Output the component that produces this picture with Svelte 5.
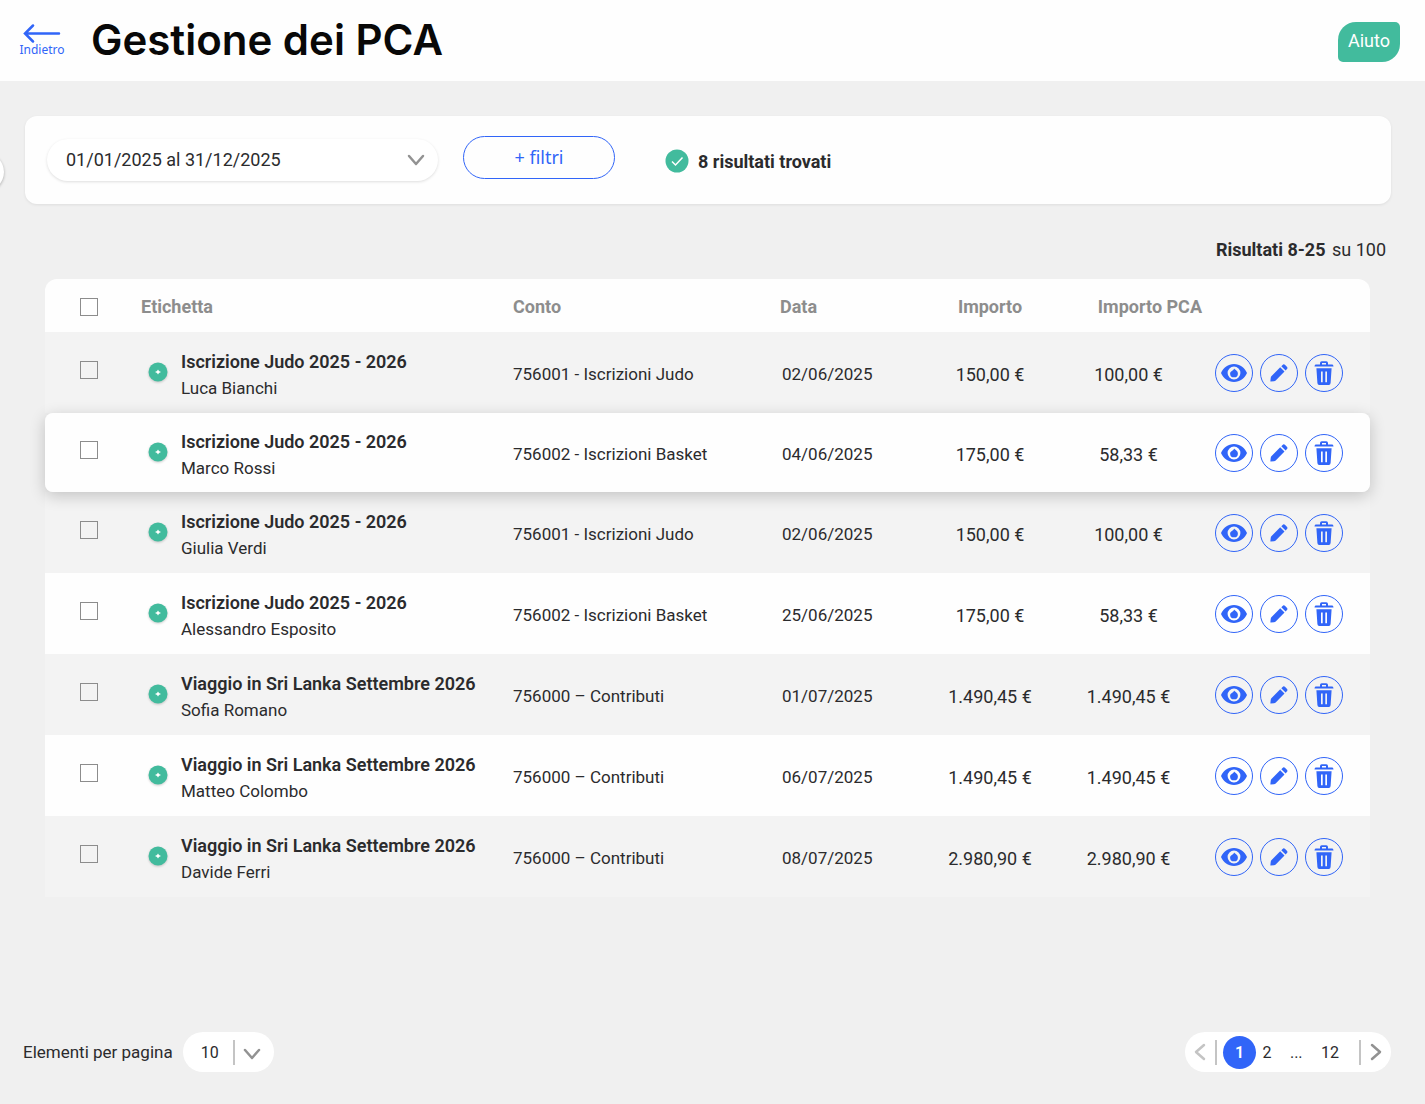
<script lang="ts">
  type Row = {
    title: string;
    person: string;
    account: string;
    date: string;
    amount: string;
    pca: string;
    raised?: boolean;
  };

  const judo = 'Iscrizione Judo 2025 - 2026';
  const trip = 'Viaggio in Sri Lanka Settembre 2026';

  const rows: Row[] = [
    { title: judo, person: 'Luca Bianchi', account: '756001 - Iscrizioni Judo', date: '02/06/2025', amount: '150,00 €', pca: '100,00 €' },
    { title: judo, person: 'Marco Rossi', account: '756002 - Iscrizioni Basket', date: '04/06/2025', amount: '175,00 €', pca: '58,33 €', raised: true },
    { title: judo, person: 'Giulia Verdi', account: '756001 - Iscrizioni Judo', date: '02/06/2025', amount: '150,00 €', pca: '100,00 €' },
    { title: judo, person: 'Alessandro Esposito', account: '756002 - Iscrizioni Basket', date: '25/06/2025', amount: '175,00 €', pca: '58,33 €' },
    { title: trip, person: 'Sofia Romano', account: '756000 – Contributi', date: '01/07/2025', amount: '1.490,45 €', pca: '1.490,45 €' },
    { title: trip, person: 'Matteo Colombo', account: '756000 – Contributi', date: '06/07/2025', amount: '1.490,45 €', pca: '1.490,45 €' },
    { title: trip, person: 'Davide Ferri', account: '756000 – Contributi', date: '08/07/2025', amount: '2.980,90 €', pca: '2.980,90 €' },
  ];

  let selected: boolean[] = $state(rows.map(() => false));
  let allSelected = $derived(selected.every(Boolean));
  let page = $state(1);

  function toggleAll() {
    const next = !allSelected;
    selected = rows.map(() => next);
  }
</script>

<div class="page">
  <header class="topbar">
    <a class="back" href="#indietro">
      <svg width="38" height="19" viewBox="0 0 38 19" aria-hidden="true">
        <path d="M10 1.5 2 9.5l8 8M2.5 9.5H36" />
      </svg>
      <span>Indietro</span>
    </a>
    <h1>Gestione dei PCA</h1>
    <button class="help" type="button">Aiuto</button>
  </header>

  <button class="drawer" type="button" aria-label="Apri menu"></button>

  <main>
    <section class="filters">
      <div class="picker period">
        <select aria-label="Periodo">
          <option>01/01/2025 al 31/12/2025</option>
        </select>
        <svg class="chevron" width="18" height="12" viewBox="0 0 18 12" aria-hidden="true">
          <path d="m2 2 7 8 7-8" />
        </svg>
      </div>
      <button class="add-filter" type="button">+ filtri</button>
      <p class="found">
        <svg width="24" height="24" viewBox="0 0 24 24" aria-hidden="true">
          <circle cx="12" cy="12" r="11.5" />
          <path d="m7 12.500 3.500 3.500 7-7.500" />
        </svg>
        8 risultati trovati
      </p>
    </section>

    <p class="count"><strong>Risultati 8-25</strong> su 100</p>

    <table>
      <colgroup>
        <col class="c-check" />
        <col />
        <col class="c-account" />
        <col class="c-date" />
        <col class="c-amount" />
        <col class="c-pca" />
        <col class="c-actions" />
      </colgroup>
      <thead>
        <tr>
          <th class="check">
            <input type="checkbox" aria-label="Seleziona tutto" checked={allSelected} onchange={toggleAll} />
          </th>
          <th>Etichetta</th>
          <th>Conto</th>
          <th>Data</th>
          <th class="center">Importo</th>
          <th class="right">Importo PCA</th>
          <th aria-label="Azioni"></th>
        </tr>
      </thead>
      <tbody>
        {#each rows as row, i}
          <tr class:raised={row.raised}>
            <td class="check">
              <input type="checkbox" aria-label="Seleziona {row.person}" bind:checked={selected[i]} />
            </td>
            <td>
              <div class="label">
                <svg class="dot" width="20" height="20" viewBox="0 0 20 20" aria-hidden="true">
                  <circle cx="10" cy="10" r="9.5" />
                  <path d="M10 7.500 11 9l2 1-2 1-1 1.500L9 11l-2-1 2-1z" />
                </svg>
                <div>
                  <strong>{row.title}</strong>
                  <span>{row.person}</span>
                </div>
              </div>
            </td>
            <td>{row.account}</td>
            <td class="date">{row.date}</td>
            <td class="center amount">{row.amount}</td>
            <td class="center amount">{row.pca}</td>
            <td class="actions-cell">
              <div class="actions">
                <button type="button" aria-label="Visualizza">
                  <svg width="26" height="18" viewBox="0 0 26 18" aria-hidden="true">
                    <path fill-rule="evenodd" d="M13 0C7 0 2.500 3.500 0 9c2.500 5.500 7 9 13 9s10.500-3.500 13-9C23.500 3.500 19 0 13 0Zm0 2.600a6.400 6.400 0 1 1 0 12.800 6.400 6.400 0 0 1 0-12.800Z" />
                    <path d="M13.200 4.500c.3 1.200 3.700 2 3.700 4.900a3.900 3.900 0 0 1-7.800 0c0-2.200 3.300-2.300 4.100-4.900Z" />
                  </svg>
                </button>
                <button type="button" aria-label="Modifica">
                  <svg width="18" height="18" viewBox="0 0 18 18" aria-hidden="true">
                    <path d="M10.200 3.300 14.500 7.600 5.700 16.400Q5 17 4 17.200L.8 17.600Q.3 17.600.4 17L.7 13.900Q.8 12.800 1.600 12ZM11.300 2.200 13.100.6Q14 0 14.900.8L17.100 3Q17.900 3.900 17.200 4.800L15.600 6.500Z" />
                  </svg>
                </button>
                <button type="button" aria-label="Elimina">
                  <svg width="20" height="24" viewBox="0 0 20 24" aria-hidden="true">
                    <path d="M6 3.500V2Q6 .2 7.800.2h4.400Q14 .2 14 2v1.500h4.300q1 0 1.200 2H.5q.2-2 1.200-2Zm2 0h4V2H8Z" fill-rule="evenodd" />
                    <path d="M2.400 7.300h15.200l-1 14.700q-.2 1.900-1.800 1.900H5.200q-1.600 0-1.800-1.900ZM7 10.500v10.700h1.700V10.500Zm4.300 0v10.700H13V10.500Z" fill-rule="evenodd" />
                  </svg>
                </button>
              </div>
            </td>
          </tr>
        {/each}
      </tbody>
    </table>
  </main>

  <footer>
    <div class="per-page">
      <label for="page-size">Elementi per pagina</label>
      <div class="picker size">
        <select id="page-size">
          <option>10</option>
          <option>25</option>
          <option>50</option>
        </select>
        <svg class="chevron" width="18" height="12" viewBox="0 0 18 12" aria-hidden="true">
          <path d="m2 2 7 8 7-8" />
        </svg>
      </div>
    </div>

    <nav class="pagination" aria-label="Paginazione">
      <button class="step prev" type="button" aria-label="Precedente" disabled={page === 1} onclick={() => page--}>
        <svg width="12" height="18" viewBox="0 0 12 18" aria-hidden="true"><path d="M10 2 2 9l8 7" /></svg>
      </button>
      <div class="numbers">
        <button type="button" class:current={page === 1} onclick={() => (page = 1)}>1</button>
        <button type="button" class="second" class:current={page === 2} onclick={() => (page = 2)}>2</button>
        <span>...</span>
        <button type="button" class:current={page === 12} onclick={() => (page = 12)}>12</button>
      </div>
      <button class="step next" type="button" aria-label="Successiva" disabled={page === 12} onclick={() => page++}>
        <svg width="12" height="18" viewBox="0 0 12 18" aria-hidden="true"><path d="m2 2 8 7-8 7" /></svg>
      </button>
    </nav>
  </footer>
</div>

<style>
  :global(body) {
    background: #f0f0f0;
  }

  .page {
    --blue: #3165f8;
    --green: #42bb9d;
    --ink: #2b2b2d;
    position: relative;
    display: flex;
    flex-direction: column;
    min-height: 100vh;
    color: var(--ink);
    font-family: Roboto, 'Liberation Sans', sans-serif;
    font-size: 18px;
    line-height: 27px;
  }

  .page :global(*) {
    box-sizing: border-box;
  }

  button,
  select {
    margin: 0;
    padding: 0;
    border: 0;
    background: none;
    color: inherit;
    font: inherit;
    cursor: pointer;
  }

  p,
  h1 {
    margin: 0;
  }

  .topbar {
    display: flex;
    align-items: center;
    height: 81px;
    padding: 0 25px 2px 20px;
    background: #fefefe;
  }

  .back {
    display: flex;
    flex-direction: column;
    align-items: center;
    width: 44px;
    padding-top: 2px;
    color: var(--blue);
    font-family: 'Noto Sans', sans-serif;
    font-size: 12px;
    line-height: 14px;
    text-decoration: none;
  }

  .back svg {
    fill: none;
    stroke: var(--blue);
    stroke-width: 2.5;
    stroke-linecap: round;
  }

  h1 {
    margin-left: 27px;
    color: #080808;
    font-family: Inter, sans-serif;
    font-size: 42px;
    font-weight: 600;
    line-height: 78px;
  }

  .help {
    width: 62px;
    height: 40px;
    margin-top: 4px;
    margin-left: auto;
    padding-bottom: 2px;
    border-radius: 18px 5px 18px 5px;
    background: var(--green);
    color: #fff;
  }

  .drawer {
    position: absolute;
    top: 153px;
    left: -34px;
    width: 38px;
    height: 38px;
    border-radius: 50%;
    background: #fff;
    box-shadow: 0 1px 3px rgba(0, 0, 0, 0.3);
  }

  main {
    padding: 35px 34px 0 25px;
  }

  .filters {
    display: flex;
    align-items: center;
    height: 88px;
    padding: 0 22px;
    border-radius: 12px;
    background: #fefefe;
    box-shadow: 0 1px 3px rgba(0, 0, 0, 0.08);
  }

  .picker {
    display: grid;
    align-items: center;
    border-radius: 21px;
    background: #fff;
  }

  .picker select {
    grid-area: 1 / 1;
    width: 100%;
    height: 100%;
    appearance: none;
    border-radius: inherit;
  }

  .picker .chevron {
    grid-area: 1 / 1;
    justify-self: end;
    pointer-events: none;
  }

  .chevron,
  .step svg {
    fill: none;
    stroke: #929292;
    stroke-width: 2.5;
    stroke-linecap: round;
    stroke-linejoin: round;
  }

  .period {
    width: 391px;
    height: 42px;
    box-shadow: 0 1px 3px rgba(0, 0, 0, 0.13);
  }

  .period select {
    padding: 0 0 2px 19px;
  }

  .period .chevron {
    margin-right: 13px;
  }

  .add-filter {
    width: 152px;
    height: 43px;
    margin: 0 50px 5px 25px;
    border: 1px solid var(--blue);
    border-radius: 22px;
    color: var(--blue);
    font-family: 'Noto Sans', sans-serif;
  }

  .found {
    display: flex;
    align-items: center;
    gap: 9px;
    padding-top: 2px;
    font-weight: 700;
  }

  .found circle,
  .dot circle {
    fill: var(--green);
  }

  .found path {
    fill: none;
    stroke: #fff;
    stroke-width: 1.5;
  }

  .count {
    padding: 32px 0 16px;
    margin-right: 5px;
    text-align: right;
  }

  .count strong {
    font-weight: 700;
    margin-right: 2px;
  }

  table {
    width: calc(100% - 41px);
    margin-left: 20px;
    border-spacing: 0;
    table-layout: fixed;
  }

  .c-check {
    width: 96px;
  }

  .c-account {
    width: 267px;
  }

  .c-date {
    width: 145px;
  }

  .c-amount {
    width: 130px;
  }

  .c-pca {
    width: 147px;
  }

  .c-actions {
    width: 168px;
  }

  th,
  td {
    padding: 4px 0 0;
    text-align: left;
  }

  th {
    height: 53px;
    padding-top: 2px;
    background: #fefefe;
    color: #8d8d8d;
    font-weight: 700;
  }

  th:first-child {
    border-top-left-radius: 12px;
  }

  th:last-child {
    border-top-right-radius: 12px;
  }

  td {
    height: 81px;
    background: #f3f3f3;
    font-size: 17px;
  }

  tbody tr:nth-child(even) td {
    background: #fefefe;
  }

  .raised {
    position: relative;
    border-radius: 8px;
    box-shadow: 0 4px 16px rgba(0, 0, 0, 0.2);
  }

  .raised td {
    height: 79px;
  }

  .raised td:first-child {
    border-radius: 8px 0 0 8px;
  }

  .raised td:last-child {
    border-radius: 0 8px 8px 0;
  }

  .check {
    padding-left: 35px;
  }

  td.check {
    padding-top: 0;
    padding-bottom: 6px;
  }

  .check input {
    display: block;
    width: 18px;
    height: 18px;
    margin: 0;
    appearance: none;
    border: 1px solid #8c8c8c;
  }

  .check input:checked {
    background: var(--blue);
  }

  .center {
    text-align: center;
  }

  .amount {
    font-size: 18px;
  }

  .right {
    text-align: right;
  }

  .date {
    padding-left: 2px;
  }

  .label {
    display: flex;
    align-items: center;
    gap: 13px;
    padding-left: 7px;
  }

  .label strong,
  .label span {
    display: block;
    white-space: nowrap;
  }

  .label strong {
    font-size: 18px;
    font-weight: 600;
  }

  .dot {
    flex: none;
    margin-bottom: 6px;
    filter: drop-shadow(0 1px 1px rgba(0, 0, 0, 0.2));
  }

  .dot path {
    fill: #fff;
  }

  .actions-cell {
    padding-top: 0;
  }

  .actions {
    display: flex;
    gap: 7px;
    padding-left: 13px;
  }

  .actions button {
    display: grid;
    place-items: center;
    width: 38px;
    height: 38px;
    border: 1px solid var(--blue);
    border-radius: 50%;
  }

  .actions svg {
    fill: var(--blue);
  }

  footer {
    display: flex;
    align-items: center;
    justify-content: space-between;
    margin-top: auto;
    padding: 32px 34px 32px 23px;
  }

  .per-page {
    display: flex;
    align-items: center;
    gap: 10px;
    font-size: 17px;
  }

  .size {
    width: 91px;
    height: 40px;
  }

  .size select {
    padding-left: 18px;
    font-size: 16px;
  }

  .size .chevron {
    box-sizing: content-box;
    padding: 8px 13px 5px 8px;
    border-left: 2px solid #c4c4c4;
  }

  .pagination {
    display: flex;
    align-items: center;
    width: 206px;
    height: 40px;
    border-radius: 20px;
    background: #fff;
    font-size: 16px;
  }

  .step {
    display: grid;
    align-items: center;
    width: 32px;
    height: 25px;
  }

  .prev {
    padding-left: 9px;
    border-right: 2px solid #c4c4c4;
  }

  .prev svg {
    stroke: #c4c4c4;
  }

  .next {
    padding-left: 9px;
    border-left: 2px solid #c4c4c4;
  }

  .numbers {
    display: flex;
    flex: 1;
    align-items: center;
    justify-content: space-between;
    padding: 0 20px 0 6px;
  }

  .numbers .second {
    margin-left: -12px;
  }

  .numbers .current {
    width: 33px;
    height: 33px;
    border-radius: 50%;
    background: var(--blue);
    color: #fff;
    font-weight: 600;
  }
</style>
